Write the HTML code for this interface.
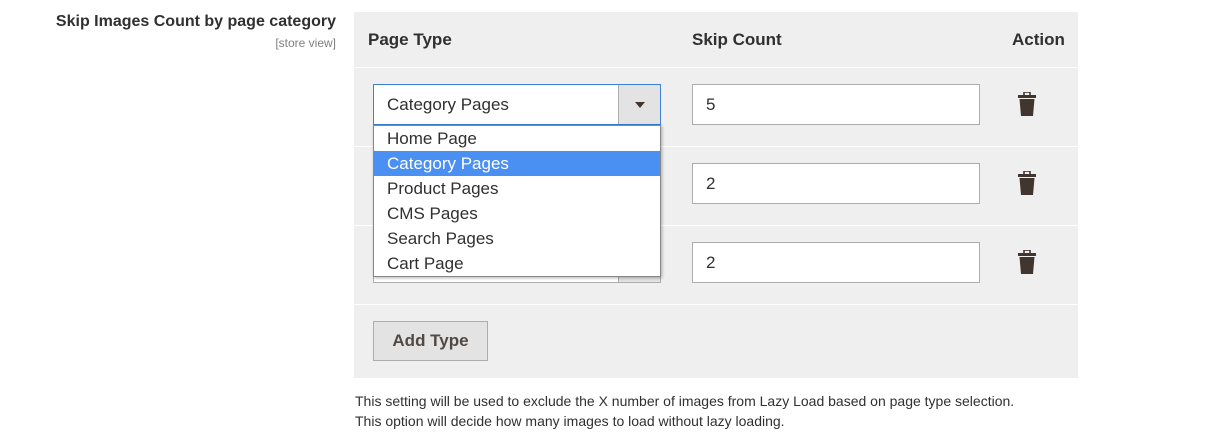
<!DOCTYPE html>
<html><head><style>
body{margin:0;width:1214px;height:443px;background:#fff;font-family:"Liberation Sans",sans-serif;color:#303030;position:relative;overflow:hidden}
.a{position:absolute}
.lbl{left:0;width:336px;text-align:right;top:13px;font-size:16px;font-weight:bold;color:#303030}
.sv{left:0;width:336px;text-align:right;top:36px;font-size:12px;color:#808080}
.tbl{left:354px;top:12px;width:724px;height:366px;background:#efefef}
.h{top:30px;font-size:17px;font-weight:bold;color:#303030}
.line{left:354px;width:724px;height:1px;background:#fff}
.inp{background:#fff;border:1px solid #adadad;height:41px;box-sizing:border-box;font-size:17px;padding:10px 13px}
.sel{left:373px;width:288px}
.arr{position:absolute;right:0;top:0;width:42px;height:100%;background:#e3e3e3;border-left:1px solid #adadad;box-sizing:border-box}
.arr:after{content:"";position:absolute;left:16px;top:17px;border:5px solid transparent;border-top:6px solid #41362f}
.num{left:692px;width:288px}
.dd{left:373px;top:125px;width:288px;height:152px;background:#fff;border:1px solid #888;box-sizing:border-box;box-shadow:1px 1px 3px rgba(0,0,0,.3)}
.dd div{height:25px;line-height:25px;padding-left:13px;font-size:17px;color:#303030}
.dd .on{background:#4a8ff2;color:#fff}
.btn{left:373px;top:321px;width:115px;height:40px;background:#e3e3e3;border:1px solid #adadad;box-sizing:border-box;font-size:17px;font-weight:bold;text-align:center;line-height:38px;color:#514943}
.note{left:355px;top:391px;font-size:14px;line-height:20px;color:#303030;width:670px}
</style></head><body>
<div class="a lbl">Skip Images Count by page category</div>
<div class="a sv">[store view]</div>
<div class="a tbl"></div>
<div class="a h" style="left:368px">Page Type</div>
<div class="a h" style="left:692px">Skip Count</div>
<div class="a h" style="left:1012px">Action</div>
<div class="a line" style="top:67px"></div>
<div class="a line" style="top:146px"></div>
<div class="a line" style="top:225px"></div>
<div class="a line" style="top:304px"></div>

<div class="a inp sel" style="top:84px;border-color:#3b82d6">Category Pages<div class="arr"></div></div>
<div class="a inp sel" style="top:242px"><div class="arr"></div></div>
<div class="a inp num" style="top:84px">5</div>
<div class="a inp num" style="top:163px">2</div>
<div class="a inp num" style="top:242px">2</div>

<svg class="a" style="left:1017px;top:92px" width="20" height="26" viewBox="0 0 20 26"><rect x="7" y="0" width="6" height="4" fill="none" stroke="#41362f" stroke-width="1.6"/><rect x="1" y="3" width="18" height="3" fill="#41362f"/><path d="M2.5 7h15l-1.5 17h-12z" fill="#41362f"/></svg>
<svg class="a" style="left:1017px;top:171px" width="20" height="26" viewBox="0 0 20 26"><rect x="7" y="0" width="6" height="4" fill="none" stroke="#41362f" stroke-width="1.6"/><rect x="1" y="3" width="18" height="3" fill="#41362f"/><path d="M2.5 7h15l-1.5 17h-12z" fill="#41362f"/></svg>
<svg class="a" style="left:1017px;top:250px" width="20" height="26" viewBox="0 0 20 26"><rect x="7" y="0" width="6" height="4" fill="none" stroke="#41362f" stroke-width="1.6"/><rect x="1" y="3" width="18" height="3" fill="#41362f"/><path d="M2.5 7h15l-1.5 17h-12z" fill="#41362f"/></svg>

<div class="a dd"><div>Home Page</div><div class="on">Category Pages</div><div>Product Pages</div><div>CMS Pages</div><div>Search Pages</div><div>Cart Page</div></div>

<div class="a btn">Add Type</div>
<div class="a note">This setting will be used to exclude the X number of images from Lazy Load based on page type selection. This option will decide how many images to load without lazy loading.</div>
</body></html>
